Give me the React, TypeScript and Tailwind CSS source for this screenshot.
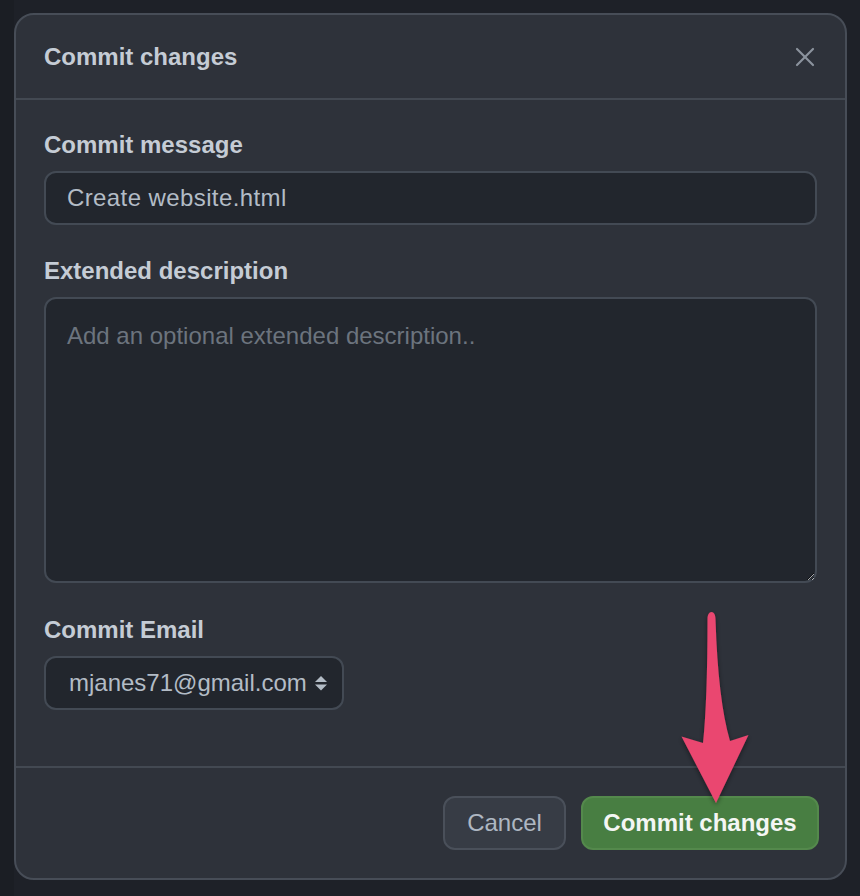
import { X } from 'lucide-react';

function SelectArrows() {
  return (
    <svg width="14" height="18" viewBox="0 0 14 18" className="shrink-0">
      <path d="M7 2 L13 8 L1 8 Z" fill="#b3bcc6" strokeLinejoin="round" />
      <path d="M7 16.5 L13 10.5 L1 10.5 Z" fill="#b3bcc6" strokeLinejoin="round" />
    </svg>
  );
}

function PointerArrow() {
  return (
    <svg
      className="absolute left-0 top-0 pointer-events-none"
      width="860"
      height="896"
      viewBox="0 0 860 896"
    >
      <defs>
        <filter id="arrowShadow" x="-50%" y="-10%" width="200%" height="130%">
          <feDropShadow dx="0" dy="2" stdDeviation="2.5" floodColor="#000" floodOpacity="0.45" />
        </filter>
      </defs>
      <path
        d="M711.5 612 C714 612 715.5 615 715.5 619 Q 718 700 730 741 L 748.5 735 L 716 803 L 681.5 736.5 L 703 743 Q 707.5 700 707.5 619 C 707.5 615 709 612 711.5 612 Z"
        fill="#ea4670"
        filter="url(#arrowShadow)"
      />
    </svg>
  );
}

export default function App() {
  return (
    <div
      className="relative w-[860px] h-[896px] bg-[#1e2128] overflow-hidden"
      style={{ fontFamily: '"Liberation Sans", Arial, sans-serif' }}
    >
      <div className="absolute left-0 top-0 w-[14px] h-full bg-[#1b1e24]" />
      <div className="relative ml-[14px] mt-[13px] w-[833px] rounded-[20px] border-2 border-[#474d57] bg-[#2e323a]">
        {/* header */}
        <div className="h-[85px] flex items-center justify-between pl-[28px] pr-[24px] border-b-2 border-[#434952]">
          <h2 className="text-[24px] leading-[30px] font-bold text-[#c5ccd5]">Commit changes</h2>
          <X className="w-[32px] h-[32px] text-[#8b939d]" strokeWidth={1.6} />
        </div>

        {/* body */}
        <div className="px-[28px] pt-[30px] pb-[56px]">
          <label className="block text-[24px] leading-[30px] font-bold text-[#c5ccd5] mb-[11px]">
            Commit message
          </label>
          <div className="h-[54px] flex items-center px-[21px] rounded-[12px] border-2 border-[#434a54] bg-[#22262d] text-[24px] text-[#b3bcc6] tracking-[0.4px]">
            Create website.html
          </div>

          <label className="block mt-[31px] text-[24px] leading-[30px] font-bold text-[#c5ccd5] mb-[11px]">
            Extended description
          </label>
          <textarea
            className="block w-full h-[286px] px-[21px] py-[22px] rounded-[12px] border-2 border-[#434a54] bg-[#22262d] text-[24px] leading-[30px] text-[#b3bcc6] placeholder:text-[#6c747e] outline-none [color-scheme:dark]"
            placeholder="Add an optional extended description.."
          />

          <label className="block mt-[32px] text-[24px] leading-[30px] font-bold text-[#c5ccd5] mb-[11px]">
            Commit Email
          </label>
          <div className="w-[300px] h-[54px] flex items-center justify-between pl-[23px] pr-[14px] rounded-[12px] border-2 border-[#434a54] bg-[#22262d] text-[24px] text-[#b3bcc6]">
            <span>mjanes71@gmail.com</span>
            <SelectArrows />
          </div>
        </div>

        {/* footer */}
        <div className="border-t-2 border-[#434952] px-[26px] pt-[28px] pb-[28px] flex justify-end gap-[15px]">
          <button className="h-[54px] w-[123px] rounded-[12px] border-2 border-[#4a505a] bg-[#373c45] text-[24px] text-[#aeb7c2]">
            Cancel
          </button>
          <button className="h-[54px] w-[238px] rounded-[12px] border-2 border-[#54894c] bg-[#487e42] text-[24px] font-bold text-[#f4f6f4]">
            Commit changes
          </button>
        </div>
      </div>
      <PointerArrow />
    </div>
  );
}
